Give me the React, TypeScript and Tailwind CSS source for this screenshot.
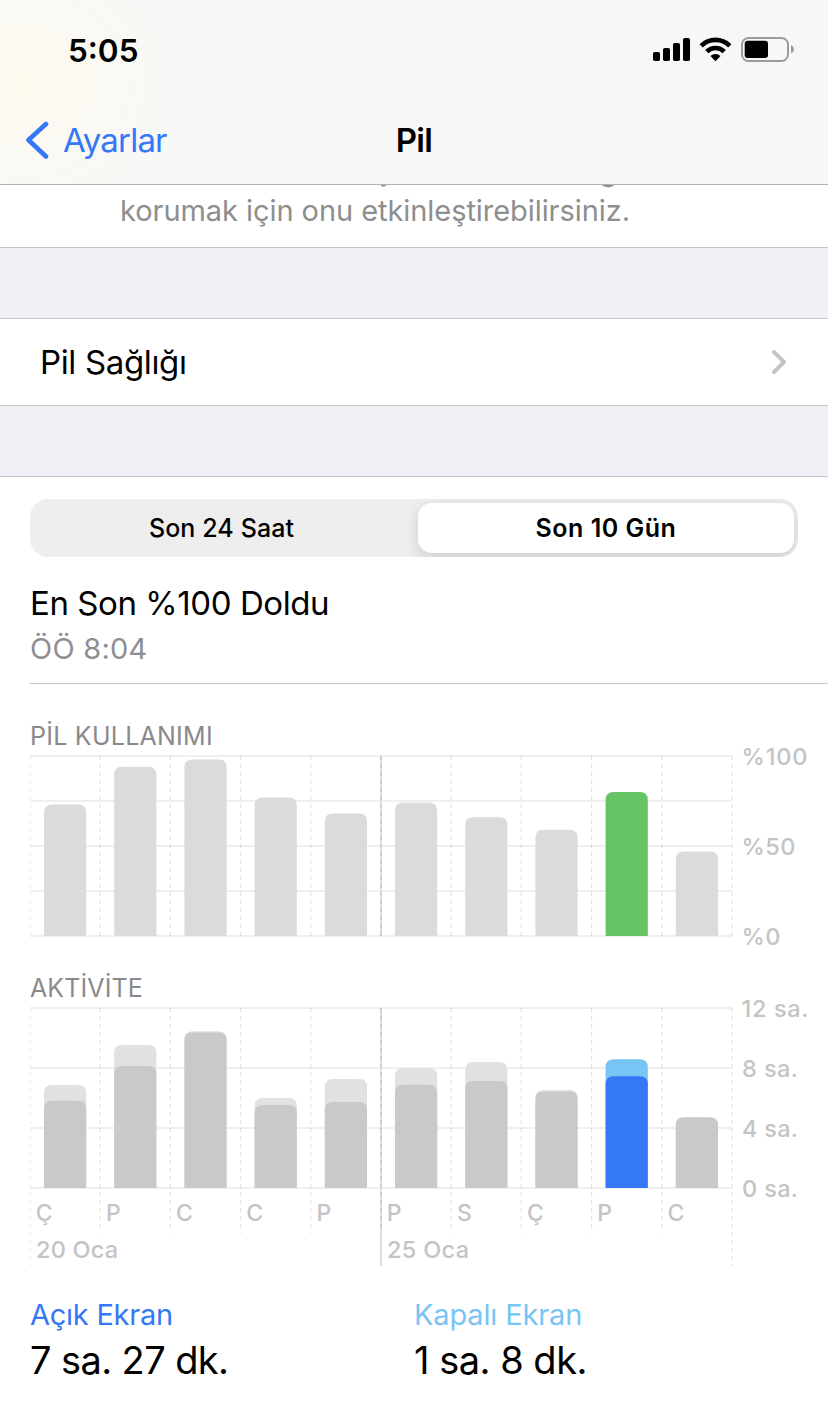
const COL = 70.2
const LEFT = 30
const RIGHT = LEFT + COL * 10
const PLOT_TOP = 5
const PLOT_HEIGHT = 180
const BASE = PLOT_TOP + PLOT_HEIGHT

type Day = {
  letter: string
  level: number
  total: number
  screenOn: number
}

// level: percent, total and screenOn: minutes
const days: Day[] = [
  { letter: 'Ç', level: 73, total: 412, screenOn: 349 },
  { letter: 'P', level: 94, total: 572, screenOn: 488 },
  { letter: 'C', level: 98, total: 627, screenOn: 622 },
  { letter: 'C', level: 77, total: 360, screenOn: 332 },
  { letter: 'P', level: 68, total: 436, screenOn: 344 },
  { letter: 'P', level: 74, total: 480, screenOn: 413 },
  { letter: 'S', level: 66, total: 504, screenOn: 428 },
  { letter: 'Ç', level: 59, total: 392, screenOn: 386 },
  { letter: 'P', level: 80, total: 515, screenOn: 447 },
  { letter: 'C', level: 47, total: 284, screenOn: 282 },
]

const SELECTED = 8

function barPath(index: number, height: number) {
  const x = LEFT + COL * index + 14
  const w = 42.2
  const r = 8
  const y = BASE - height
  return `M${x} ${BASE}V${y + r}Q${x} ${y} ${x + r} ${y}H${x + w - r}Q${x + w} ${y} ${x + w} ${y + r}V${BASE}Z`
}

function Grid({ rows, tail, edgeTail }: { rows: number; tail: number; edgeTail: number }) {
  return (
    <g>
      {Array.from({ length: rows + 1 }, (_, i) => (
        <rect
          key={i}
          x={LEFT}
          y={PLOT_TOP - 1 + (PLOT_HEIGHT / rows) * i}
          width={RIGHT - LEFT}
          height={2}
          fill="#efefef"
        />
      ))}
      <rect x={LEFT + COL * 5 - 1} y={PLOT_TOP} width={2} height={PLOT_HEIGHT + edgeTail} fill="#dedede" />
      {Array.from({ length: 11 }, (_, i) => (
        <line
          key={i}
          x1={LEFT + COL * i + (i === 0 ? 0.5 : 0)}
          x2={LEFT + COL * i + (i === 0 ? 0.5 : 0)}
          y1={PLOT_TOP}
          y2={BASE + (i === 0 || i === 10 ? edgeTail : tail)}
          stroke="#000"
          strokeOpacity={i === 0 || i === 5 ? 0.07 : 0.11}
          strokeWidth={i === 5 ? 2 : 1.2}
          strokeDasharray="4 4"
        />
      ))}
    </g>
  )
}

function AxisLabels({ labels }: { labels: { text: string; x: number; y: number; width: number }[] }) {
  return (
    <g fill="#c4c4c6" fontSize={23.5} fontWeight={500}>
      {labels.map((label) => (
        <text key={label.text} x={label.x} y={label.y} textLength={label.width}>
          {label.text}
        </text>
      ))}
    </g>
  )
}

function UsageChart() {
  return (
    <svg className="block overflow-visible" width="828" height="212" viewBox="0 0 828 212">
      <Grid rows={4} tail={0} edgeTail={0} />
      {days.map((day, i) => (
        <path
          key={i}
          d={barPath(i, (day.level / 100) * PLOT_HEIGHT)}
          fill={i === SELECTED ? '#65c466' : '#dbdbdb'}
        />
      ))}
      <AxisLabels
        labels={[
          { text: '%100', x: 741.5, y: 14, width: 66 },
          { text: '%50', x: 741.5, y: 104, width: 54 },
          { text: '%0', x: 741.5, y: 194, width: 39 },
        ]}
      />
    </svg>
  )
}

function ActivityChart() {
  return (
    <svg className="block overflow-visible" width="828" height="280" viewBox="0 0 828 280">
      <Grid rows={3} tail={45} edgeTail={78} />
      {days.map((day, i) => (
        <g key={i}>
          <path d={barPath(i, day.total / 4)} fill={i === SELECTED ? '#78c5f5' : '#e1e1e1'} />
          <path d={barPath(i, day.screenOn / 4)} fill={i === SELECTED ? '#3478f6' : '#c9c9c9'} />
        </g>
      ))}
      <AxisLabels
        labels={[
          { text: '12 sa.', x: 741.5, y: 14, width: 67 },
          { text: '8 sa.', x: 742, y: 74, width: 56 },
          { text: '4 sa.', x: 742, y: 134, width: 56 },
          { text: '0 sa.', x: 742, y: 194, width: 56 },
        ]}
      />
      <g fill="#c4c4c6" fontSize={23.5} fontWeight={500}>
        {days.map((day, i) => (
          <text key={i} x={LEFT + COL * i + 5.7} y={218} fontSize={23}>
            {day.letter}
          </text>
        ))}
        <text x={36} y={254.5} textLength={82}>
          20 Oca
        </text>
        <text x={387} y={254.5} textLength={82}>
          25 Oca
        </text>
      </g>
    </svg>
  )
}

function StatusIcons() {
  return (
    <svg className="block" width="144" height="28" viewBox="0 0 144 28">
      <rect x="1" y="16" width="7" height="9" rx="1.8" />
      <rect x="11" y="12" width="7" height="13" rx="1.8" />
      <rect x="21" y="7" width="7" height="18" rx="1.8" />
      <rect x="31" y="2" width="7" height="23" rx="1.8" />
      <g fill="none" stroke="#000" strokeWidth="4.6">
        <path d="M49.2 9.8a20.3 20.3 0 0 1 28.6 0" />
        <path d="M54.8 15.6a12.4 12.4 0 0 1 17.4 0" />
      </g>
      <path d="M58.5 19.9a7.2 7.2 0 0 1 10 0L63.5 25.2Z" />
      <rect x="90" y="2" width="46" height="23" rx="6.5" fill="none" stroke="#9b9b9b" strokeWidth="2" />
      <rect x="92.7" y="4.7" width="23.3" height="17.3" rx="3" />
      <path d="M139 9.3c4 1.5 4 6.5 0 8Z" fill="#9b9b9b" />
    </svg>
  )
}

function Header() {
  return (
    <header className="relative z-10 h-[185px] border-b border-[#b2b2b2] bg-[#f7f7f7] bg-[radial-gradient(ellipse_170px_150px_at_25px_85px,#fdfaef_0%,#fbf9f2_35%,#f8f8f5_75%,#f7f7f7_100%)]">
      <div className="flex h-[100px] items-center justify-between pl-[68px] pr-8">
        <span className="pt-px text-[31.5px] font-semibold">5:05</span>
        <StatusIcons />
      </div>
      <div className="grid h-20 grid-cols-3 items-center">
        <div className="flex items-center pl-[25px] text-[#3478f6]">
          <svg width="24" height="40" viewBox="0 0 24 40" fill="none" stroke="currentColor">
            <path d="M21 4 3.5 20 21 36.5" strokeWidth="4.6" strokeLinecap="round" strokeLinejoin="round" />
          </svg>
          <span className="pl-[14px] pt-0.5 text-[33px] tracking-[-0.8px]">Ayarlar</span>
        </div>
        <h1 className="pt-0.5 text-center text-[33px] font-semibold tracking-[-0.7px]">Pil</h1>
      </div>
    </header>
  )
}

function Segments() {
  return (
    <div className="mx-[30px] mt-[22px] flex h-[58px] w-[768px] overflow-hidden rounded-[18px] bg-[#eeeeee] p-1 text-[25px] font-medium">
      <div className="flex w-[384px] items-center justify-center pr-[9px] pt-0.5 tracking-[0.1px]">Son 24 Saat</div>
      <div className="flex flex-1 items-center justify-center rounded-[14px] bg-white pt-0.5 font-semibold tracking-[0.5px] shadow-[0_4px_14px_rgba(0,0,0,0.14)]">
        Son 10 Gün
      </div>
    </div>
  )
}

export default function App() {
  return (
    <main className="h-[1427px] w-[828px] overflow-hidden bg-white font-['Inter',sans-serif] text-black">
      <Header />

      {/* the first line is scrolled under the header */}
      <section className="-mt-[34px] h-[97px] border-b border-[#c6c6c8] pl-[120px] text-[29px] text-[#8e8e8e]">
        <div className="flex h-10 items-center">
          <span className="pl-[255px]">ş</span>
          <span className="pl-[209px]">ğ</span>
        </div>
        <p className="h-10 leading-10 tracking-[-0.06px]">korumak için onu etkinleştirebilirsiniz.</p>
      </section>

      <div className="h-[70px] bg-[#f1f0f6]" />

      <section className="flex h-[88px] items-center justify-between border-y border-[#c6c6c8] pl-10 pr-10">
        <span className="pt-0.5 text-[33px] tracking-[-0.35px]">Pil Sağlığı</span>
        <svg width="18" height="28" viewBox="0 0 18 28" fill="none" stroke="#c4c4c6">
          <path d="M4 4 14 14 4 24" strokeWidth="4" strokeLinecap="round" strokeLinejoin="round" />
        </svg>
      </section>

      <div className="h-[70px] bg-[#f1f0f6]" />

      <section className="border-t border-[#c6c6c8]">
        <Segments />
        <div className="ml-[30px] mt-[26px] border-b border-[#c6c6c8] pb-[14px]">
          <h2 className="h-10 text-[33px] leading-10 tracking-[-0.43px]">En Son %100 Doldu</h2>
          <p className="mt-[5px] h-[41px] text-[29px] leading-[41px] tracking-[0.25px] text-[#8e8e93]">ÖÖ 8:04</p>
        </div>

        <h3 className="ml-[30px] mt-[37px] h-[30px] text-[25px] leading-[30px] tracking-[0.25px] text-[#8a8a8e]">
          PİL KULLANIMI
        </h3>
        <UsageChart />
        <h3 className="ml-[30px] mt-[10px] h-[30px] text-[25px] leading-[30px] tracking-[0.1px] text-[#8a8a8e]">
          AKTİVİTE
        </h3>
        <ActivityChart />

        <div className="grid grid-cols-[384px_1fr] pl-[30px] pt-3">
          <div>
            <p className="h-10 text-[29px] leading-10 tracking-[-0.25px] text-[#3478f6]">Açık Ekran</p>
            <p className="h-[50px] text-[38px] leading-[50px] tracking-[-0.6px]">7 sa. 27 dk.</p>
          </div>
          <div>
            <p className="h-10 text-[29px] leading-10 tracking-[-0.15px] text-[#78c5f5]">Kapalı Ekran</p>
            <p className="h-[50px] text-[38px] leading-[50px] tracking-[-0.5px]">1 sa. 8 dk.</p>
          </div>
        </div>
      </section>
    </main>
  )
}
